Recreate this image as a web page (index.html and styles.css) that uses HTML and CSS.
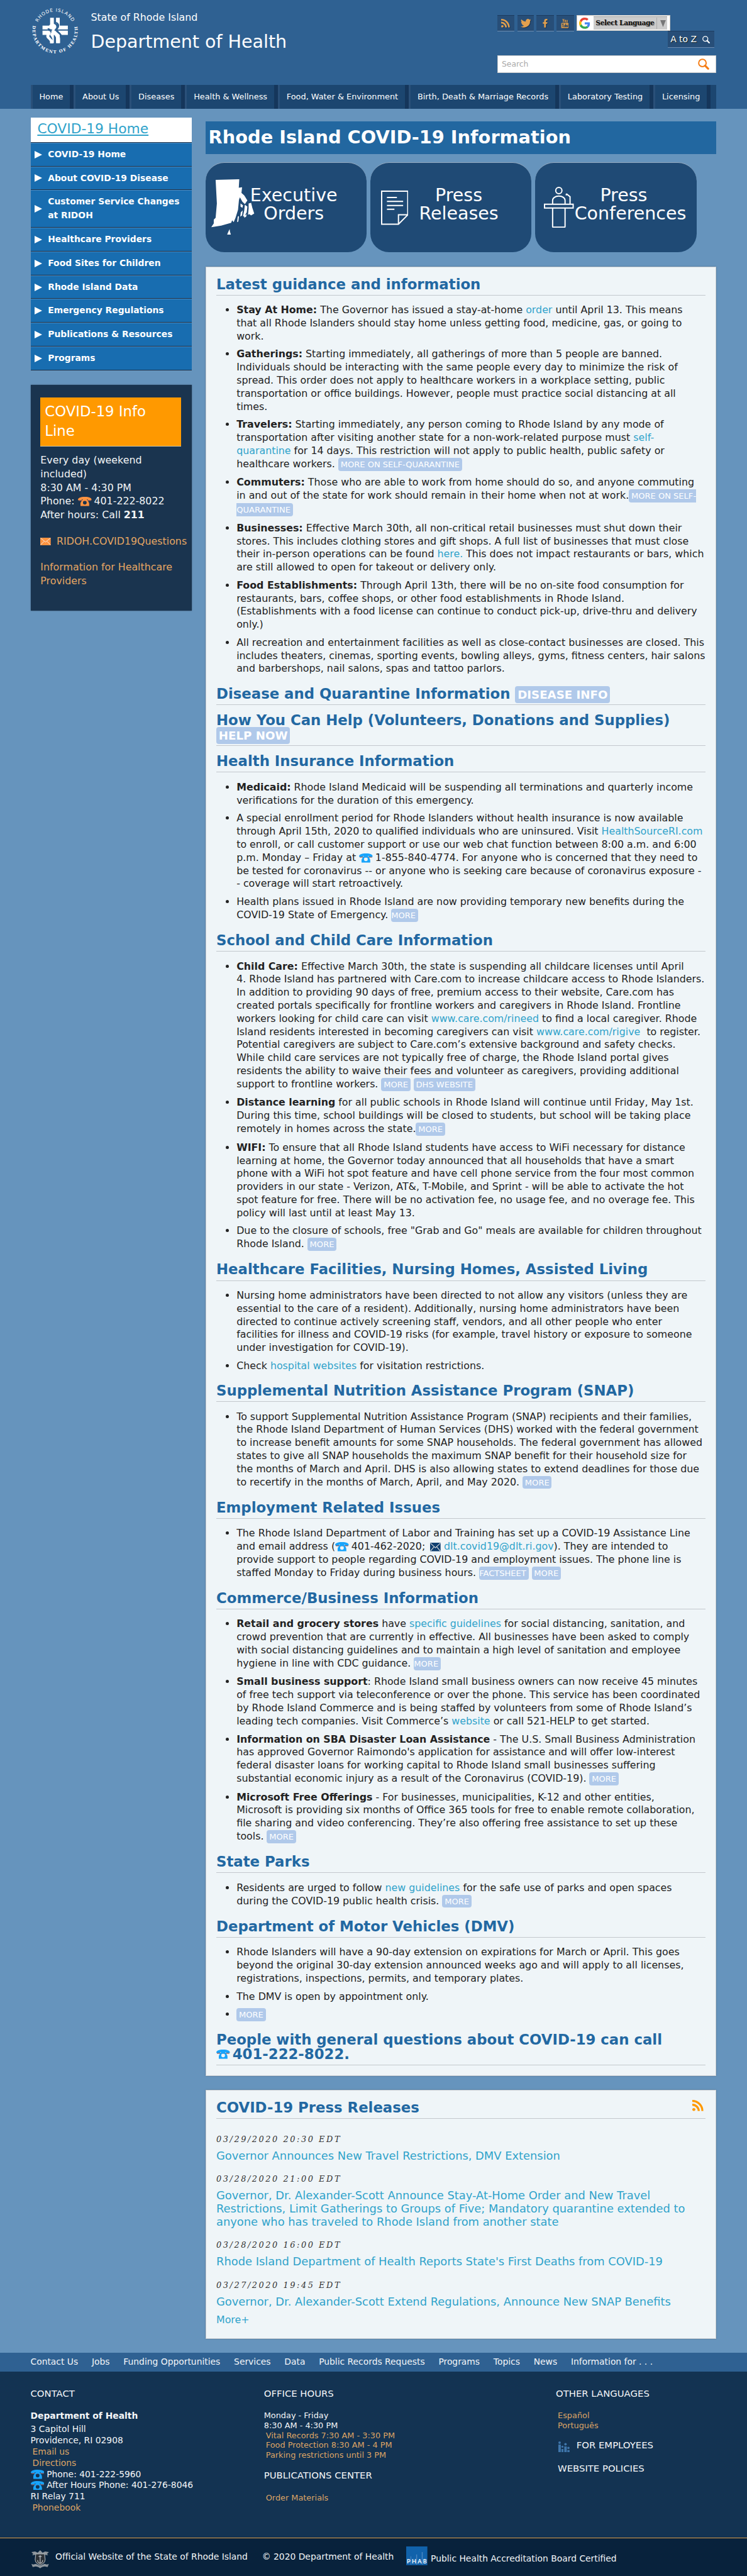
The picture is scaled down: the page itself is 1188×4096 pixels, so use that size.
FILE: index.html
```html
<!DOCTYPE html>
<html lang="en">
<head>
<meta charset="utf-8">
<title>Rhode Island COVID-19 Information: Department of Health</title>
<link rel="stylesheet" href="styles.css">
</head>
<body>
<svg class="sprite" aria-hidden="true">
  <symbol id="phone" viewBox="0 0 22 15">
    <path d="M1 5h20v1.500H1z" fill="#8a5f63"/>
    <path d="M0 5.200C0 1.500 4 0 11 0s11 1.500 11 5.200h-6.200V4H6.200v1.200z" fill="currentColor"/>
    <path fill-rule="evenodd" d="M8 3h6c.5 3 4 4.500 4 8.500V15H4v-3.500C4 7.500 7.500 6 8 3zm3 3.300a3 3 0 1 0 0 6a3 3 0 1 0 0-6z" fill="currentColor"/>
  </symbol>
  <symbol id="mail" viewBox="0 0 17 12" preserveAspectRatio="none">
    <path d="M0 0h17v12H0z" fill="currentColor"/>
    <path d="M.5.5l8 6.500 8-6.500M.5 11.500l6-6M16.500 11.500l-6-6" fill="none" stroke="#f6f1ec" stroke-width=".9"/>
  </symbol>
  <symbol id="rss" viewBox="0 0 16 16">
    <circle cx="2.200" cy="13.800" r="2.200"/>
    <path d="M0 5.300v3A7.700 7.700 0 0 1 7.700 16h3A10.700 10.700 0 0 0 0 5.300zM0 0v3A13 13 0 0 1 13 16h3A16 16 0 0 0 0 0z"/>
  </symbol>
  <symbol id="lens" viewBox="0 0 18 18">
    <ellipse cx="7.200" cy="7.200" rx="6" ry="6" fill="none" stroke="currentColor" stroke-width="2"/>
    <path d="M11.500 11.500l5 5" stroke="currentColor" stroke-width="3.200" stroke-linecap="round"/>
  </symbol>
</svg>

<header class="masthead">
  <div class="wrap">
    <div class="brand-row">
      <svg class="seal" viewBox="0 0 78 78">
        <defs>
          <path id="arc-top" d="M8.500 39a30.500 30.500 0 0 1 61 0"/>
          <path id="arc-bottom" d="M4.400 27.700a36.400 36.400 0 1 0 69.200 0"/>
        </defs>
        <text class="seal-top"><textPath href="#arc-top" startOffset="50%" text-anchor="middle">RHODE ISLAND</textPath></text>
        <text class="seal-bottom"><textPath href="#arc-bottom" startOffset="50%" text-anchor="middle">DEPARTMENT OF HEALTH</textPath></text>
        <path fill="#fff" d="M31 18.500h6V31h3.500V18.500h6V31h13v6.200H18.800V31H31zM18.800 39.200h40.700V46h-13v13h-6V46H37v13h-6V46H18.800z"/>
        <path fill="#2f6192" d="M40 25c5 1 6.500 5 5 9l-2 3c0 3 6 6 7 10h-3c-2-4-8-6-8-10l-1-2c1-5 4-7 2-10zM27 35c5 0 7 4 6 7l-2 4c2 3 4 5 4 9h-3c0-5-5-7-4-10z"/>
        <path fill="#fff" d="M29 32c2-6 12-5 12 1 0 3-3 3-3 6 1 4 9 7 9 13v7h-6v-6c0-6-7-9-7-14 0-3 3-4 2-6-1-2-5-2-7-1zM22 42c2-4 10-4 10 1 0 3-3 3-2 6 2 3 6 5 6 8v2.500h-5V57c-1-4-7-5-6-10 0-2 2-3 1-5-1-1-3-1-4 0z"/>
      </svg>
      <div class="names">
        <div class="state">State of Rhode Island</div>
        <div class="dept">Department of Health</div>
      </div>
      <div class="tools">
        <div class="social">
          <a class="tile"><svg viewBox="0 0 16 16" class="ic"><use href="#rss"/></svg></a>
          <a class="tile t2"><svg viewBox="0 0 24 20" class="ic bird"><path d="M24 2.400a9.800 9.800 0 0 1-2.800.8A5 5 0 0 0 23.300.5a9.900 9.900 0 0 1-3.100 1.200A4.900 4.900 0 0 0 11.800 6.200 14 14 0 0 1 1.700 1a4.900 4.900 0 0 0 1.500 6.600A4.900 4.900 0 0 1 1 7v.1a4.900 4.900 0 0 0 3.900 4.800 5 5 0 0 1-2.200.1 4.900 4.900 0 0 0 4.600 3.400A9.900 9.900 0 0 1 0 17.500 14 14 0 0 0 21.500 5z"/></svg></a>
          <a class="tile"><svg viewBox="0 0 10 18" class="ic fb"><path d="M6.500 18V10h2.700l.5-3.200H6.500V4.900c0-1 .5-1.700 1.700-1.700h1.500V.3C9 .1 8.200 0 7.200 0 4.700 0 3 1.500 3 4.400v2.400H.3V10H3v8z"/></svg></a>
          <a class="tile"><svg viewBox="0 0 14 18" class="ic yt"><path fill-rule="evenodd" d="M2 0h1.200l.8 2.700L4.800 0H6L4.600 4.300V7H3.400V4.300zM6 3.200C6 1.500 8.800 1.500 8.800 3.200v2.400c0 1.900-2.800 1.900-2.800 0zm1 0v2.500h.8V3.200zM9.600 2h1v4h.6V2h1v5H9.600zM1.500 8h11C13.500 8 14 8.700 14 9.500v7c0 1-.5 1.500-1.500 1.500h-11C.5 18 0 17.500 0 16.500v-7C0 8.700.5 8 1.500 8zM1.300 9.500v1.100h1V16h1.200v-5.400h1V9.500zM4.700 11.500V16h2.500v-4.500h-.9v3.600h-.6v-3.600zM7.800 9.500V16h2.400v-4.500H8.800v-2zM10.700 11.500V16H13v-4.500zm.9.900h.5v1h-.5z"/></svg></a>
          <div class="gtrans">
            <svg class="g" viewBox="0 0 48 48"><path fill="#ea4335" d="M24 9.500c3.500 0 6.700 1.200 9.200 3.600l6.900-6.900C35.900 2.400 30.500 0 24 0 14.600 0 6.500 5.400 2.600 13.200l8 6.200C12.400 13.700 17.700 9.500 24 9.500z"/><path fill="#4285f4" d="M47 24.500c0-1.600-.2-3.100-.4-4.500H24v9h12.900c-.6 3-2.200 5.500-4.700 7.200l7.700 6C44.400 38 47 31.800 47 24.500z"/><path fill="#fbbc05" d="M10.500 28.600a14.500 14.500 0 0 1 0-9.200l-8-6.200a24 24 0 0 0 0 21.600z"/><path fill="#34a853" d="M24 48c6.500 0 11.900-2.100 15.900-5.800l-7.700-6C30 37.700 27.300 38.500 24 38.500c-6.300 0-11.600-4.200-13.500-9.900l-8 6.200C6.500 42.600 14.600 48 24 48z"/></svg>
            <span class="gsel"><span class="glabel">Select Language</span><svg class="gtri" viewBox="0 0 9 11"><path d="M0 0h9L4.500 11z" fill="#777"/></svg></span>
          </div>
        </div>
        <a class="atoz">A to Z <svg class="az-lens" viewBox="0 0 18 18"><use href="#lens"/></svg></a>
        <div class="search"><span>Search</span><svg class="s-lens" viewBox="0 0 18 18"><use href="#lens"/></svg></div>
      </div>
    </div>
    <nav class="mainnav">
      <a>Home</a><a>About Us</a><a>Diseases</a><a>Health &amp; Wellness</a><a>Food, Water &amp; Environment</a><a>Birth, Death &amp; Marriage Records</a><a>Laboratory Testing</a><a>Licensing</a>
    </nav>
  </div>
</header>

<div class="wrap columns">
  <aside class="side">
    <h2 class="side-title"><a>COVID-19 Home</a></h2>
    <ul class="side-menu">
      <li>COVID-19 Home</li>
      <li>About COVID-19 Disease</li>
      <li>Customer Service Changes at RIDOH</li>
      <li>Healthcare Providers</li>
      <li>Food Sites for Children</li>
      <li>Rhode Island Data</li>
      <li>Emergency Regulations</li>
      <li>Publications &amp; Resources</li>
      <li>Programs</li>
    </ul>
    <div class="info">
      <h3>COVID-19 Info Line</h3>
      <p>Every day (weekend included)<br>8:30 AM - 4:30 PM<br>Phone: <svg class="phone" viewBox="0 0 22 15"><use href="#phone"/></svg>401-222-8022<br>After hours: Call <b>211</b></p>
      <p class="mailline"><svg class="mail" viewBox="0 0 17 12"><use href="#mail"/></svg><a>RIDOH.COVID19Questions</a></p>
      <p><a>Information for Healthcare Providers</a></p>
    </div>
  </aside>

  <main class="main">
    <h1>Rhode Island COVID-19 Information</h1>
    <div class="cards">
      <a class="card">
        <span class="card-ic"><svg class="map" viewBox="0 0 70 92" fill="#fff"><path d="M7 2L45 1L44.200 14.700L49.500 14L48.500 23L53 27L58 35L54 41L50 37L46 30L44.500 34L43 50L39 63L36 70L33.500 67L32 71L16 75.500L0 78L4 72L4 66L7 63L9 40z"/><path d="M60 40l4-1 2 8 3 9-5 3-3-2-2 1 1-10zM54 42l4 3-1 9-4 7-2-1 2-9zM47 40l4 3-1 4-3-2zM47.500 54l3-3-1 8-3 2zM44.500 60l-1 9-2 1 1-9zM53 60l4-3-1 4-3 2zM29.500 81l.5 4 1.500 5h-6l2-5z"/></svg></span>
        <span class="card-tx">Executive<br>Orders</span>
      </a>
      <a class="card">
        <span class="card-ic"><svg class="doc" viewBox="0 0 44 56" fill="none" stroke="#fff" stroke-width="2"><path d="M1 1h42v38L28 54H1zM28 54V39h15M9.500 11h16M9.500 17.500h26M9.500 24h26M9.500 30h12"/></svg></span>
        <span class="card-tx">Press<br>Releases</span>
      </a>
      <a class="card">
        <span class="card-ic"><svg class="podium" viewBox="0 0 48 66" fill="none" stroke="#fff" stroke-width="2"><ellipse cx="24" cy="6" rx="5" ry="5"/><path d="M14 27v-5c0-4 4-7 10-7s10 3 10 7v5M1 28h46v6H1zM14 34v30q0 1 1 1h18q1 0 1-1V34M36 11l6 5v11M36 11v3"/></svg></span>
        <span class="card-tx">Press<br>Conferences</span>
      </a>
    </div>

    <section class="panel">
      <h3>Latest guidance and information</h3>
      <ul>
        <li><b>Stay At Home:</b> The Governor has issued a stay-at-home <a>order</a> until April 13. This means that all Rhode Islanders should stay home unless getting food, medicine, gas, or going to work.</li>
        <li><b>Gatherings:</b> Starting immediately, all gatherings of more than 5 people are banned. Individuals should be interacting with the same people every day to minimize the risk of spread. This order does not apply to healthcare workers in a workplace setting, public transportation or office buildings. However, people must practice social distancing at all times.</li>
        <li><b>Travelers:</b> Starting immediately, any person coming to Rhode Island by any mode of transportation after visiting another state for a non-work-related purpose must <a>self-quarantine</a> for 14 days. This restriction will not apply to public health, public safety or healthcare workers. <span class="btn">MORE ON SELF-QUARANTINE</span></li>
        <li><b>Commuters:</b> Those who are able to work from home should do so, and anyone commuting in and out of the state for work should remain in their home when not at work.<span class="btn">MORE ON SELF-QUARANTINE</span></li>
        <li><b>Businesses:</b> Effective March 30th, all non-critical retail businesses must shut down their stores. This includes clothing stores and gift shops. A full list of businesses that must close their in-person operations can be found <a>here.</a> This does not impact restaurants or bars, which are still allowed to open for takeout or delivery only.</li>
        <li><b>Food Establishments:</b> Through April 13th, there will be no on-site food consumption for restaurants, bars, coffee shops, or other food establishments in Rhode Island. (Establishments with a food license can continue to conduct pick-up, drive-thru and delivery only.)</li>
        <li>All recreation and entertainment facilities as well as close-contact businesses are closed. This includes theaters, cinemas, sporting events, bowling alleys, gyms, fitness centers, hair salons and barbershops, nail salons, spas and tattoo parlors.</li>
      </ul>
      <h3>Disease and Quarantine Information <span class="btn">DISEASE INFO</span></h3>
      <h3>How You Can Help (Volunteers, Donations and Supplies) <span class="btn">HELP NOW</span></h3>
      <h3>Health Insurance Information</h3>
      <ul>
        <li><b>Medicaid:</b> Rhode Island Medicaid will be suspending all terminations and quarterly income verifications for the duration of this emergency.</li>
        <li>A special enrollment period for Rhode Islanders without health insurance is now available through April 15th, 2020 to qualified individuals who are uninsured. Visit <a>HealthSourceRI.com</a> to enroll, or call customer support or use our web chat function between 8:00 a.m. and 6:00 p.m. Monday – Friday at <svg class="phone" viewBox="0 0 22 15"><use href="#phone"/></svg>1-855-840-4774. For anyone who is concerned that they need to be tested for coronavirus -- or anyone who is seeking care because of coronavirus exposure -<br>- coverage will start retroactively.</li>
        <li>Health plans issued in Rhode Island are now providing temporary new benefits during the COVID-19 State of Emergency. <span class="btn flush">MORE</span></li>
      </ul>
      <h3>School and Child Care Information</h3>
      <ul>
        <li><b>Child Care:</b> Effective March 30th, the state is suspending all childcare licenses until April 4.&nbsp;Rhode Island has partnered with Care.com to increase childcare access to Rhode Islanders. In addition to providing 90 days of free, premium access to their website, Care.com has created portals specifically for frontline workers and caregivers in Rhode Island. Frontline workers looking for child care can visit <a>www.care.com/rineed</a> to find a local caregiver. Rhode Island residents interested in becoming caregivers can visit <a>www.care.com/rigive</a>&nbsp; to register. Potential caregivers are subject to Care.com’s extensive background and safety checks. While child care services are not typically free of charge, the Rhode Island portal gives residents the ability to waive their fees and volunteer as caregivers, providing additional support to frontline workers. <span class="btn">MORE</span> <span class="btn">DHS WEBSITE</span></li>
        <li><b>Distance learning</b> for all public schools in Rhode Island will continue until Friday, May 1st. During this time, school buildings will be closed to students, but school will be taking place remotely in homes across the state.<span class="btn">MORE</span></li>
        <li><b>WIFI:</b> To ensure that all Rhode Island students have access to WiFi necessary for distance learning at home, the Governor today announced that all households that have a smart phone with a WiFi hot spot feature and have cell phone service from the four most common providers in our state - Verizon, AT&amp;, T-Mobile, and Sprint - will be able to activate the hot spot feature for free. There will be no activation fee, no usage fee, and no overage fee. This policy will last until at least May 13.</li>
        <li>Due to the closure of schools, free "Grab and Go" meals are available for children throughout Rhode Island. <span class="btn">MORE</span></li>
      </ul>
      <h3>Healthcare Facilities, Nursing Homes, Assisted Living</h3>
      <ul>
        <li>Nursing home administrators have been directed to not allow any visitors (unless they are essential to the care of a resident). Additionally, nursing home administrators have been directed to continue actively screening staff, vendors, and all other people who enter facilities for illness and COVID-19 risks (for example, travel history or exposure to someone under investigation for COVID-19).</li>
        <li>Check <a>hospital websites</a> for visitation restrictions.</li>
      </ul>
      <h3>Supplemental Nutrition Assistance Program (SNAP)</h3>
      <ul>
        <li>To support Supplemental Nutrition Assistance Program (SNAP) recipients and their families, the Rhode Island Department of Human Services (DHS) worked with the federal government to increase benefit amounts for some SNAP households. The federal government has allowed states to give all SNAP households the maximum SNAP benefit for their household size for the months of March and April. DHS is also allowing states to extend deadlines for those due to recertify in the months of March, April, and May 2020. <span class="btn">MORE</span></li>
      </ul>
      <h3>Employment Related Issues</h3>
      <ul>
        <li>The Rhode Island Department of Labor and Training has set up a COVID-19 Assistance Line and email address (<svg class="phone" viewBox="0 0 22 15"><use href="#phone"/></svg>401-462-2020; <svg class="mail" viewBox="0 0 17 12" preserveAspectRatio="none"><use href="#mail"/></svg><a>dlt.covid19@dlt.ri.gov</a>). They are intended to provide support to people regarding COVID-19 and employment issues. The phone line is staffed Monday to Friday during business hours. <span class="btn flush">FACTSHEET</span> <span class="btn">MORE</span></li>
      </ul>
      <h3>Commerce/Business Information</h3>
      <ul>
        <li><b>Retail and grocery stores</b> have <a>specific guidelines</a> for social distancing, sanitation, and crowd prevention that are currently in effective. All businesses have been asked to comply with social distancing guidelines and to maintain a high level of sanitation and employee hygiene in line with CDC guidance. <span class="btn flush">MORE</span></li>
        <li><b>Small business support</b>: Rhode Island small business owners can now receive 45 minutes of free tech support via teleconference or over the phone. This service has been coordinated by Rhode Island Commerce and is being staffed by volunteers from some of Rhode Island’s leading tech companies. Visit Commerce’s <a>website</a> or call 521-HELP to get started.</li>
        <li><b>Information on SBA Disaster Loan Assistance</b> - The U.S. Small Business Administration has approved Governor Raimondo's application for assistance and will offer low-interest federal disaster loans for working capital to Rhode Island small businesses suffering substantial economic injury as a result of the Coronavirus (COVID-19). <span class="btn">MORE</span></li>
        <li><b>Microsoft Free Offerings</b> - For businesses, municipalities, K-12 and other entities, Microsoft&nbsp;is providing six months of Office 365 tools for free to enable remote collaboration, file sharing and video conferencing. They’re also offering free assistance to set up these tools. <span class="btn">MORE</span></li>
      </ul>
      <h3>State Parks</h3>
      <ul>
        <li>Residents are urged to follow <a>new guidelines</a> for the safe use of parks and open spaces during the COVID-19 public health crisis. <span class="btn">MORE</span></li>
      </ul>
      <h3>Department of Motor Vehicles (DMV)</h3>
      <ul>
        <li>Rhode Islanders will have a 90-day extension on expirations for March or April. This goes beyond the original 30-day extension announced weeks ago and will apply to all licenses, registrations, inspections, permits, and temporary plates.</li>
        <li>The DMV is open by appointment only.</li>
        <li><span class="btn">MORE</span></li>
      </ul>
      <h3>People with general questions about COVID-19 can call <span class="keep"><svg class="phone" viewBox="0 0 22 15"><use href="#phone"/></svg>401-222-8022.</span></h3>
    </section>

    <section class="panel press">
      <h3>COVID-19 Press Releases<svg class="press-rss" viewBox="0 0 16 16"><use href="#rss"/></svg></h3>
      <div class="date">03/29/2020 20:30 EDT</div>
      <a class="release">Governor Announces New Travel Restrictions, DMV Extension</a>
      <div class="date">03/28/2020 21:00 EDT</div>
      <a class="release">Governor, Dr. Alexander-Scott Announce Stay-At-Home Order and New Travel Restrictions, Limit Gatherings to Groups of Five; Mandatory quarantine extended to anyone who has traveled to Rhode Island from another state</a>
      <div class="date">03/28/2020 16:00 EDT</div>
      <a class="release">Rhode Island Department of Health Reports State's First Deaths from COVID-19</a>
      <div class="date">03/27/2020 19:45 EDT</div>
      <a class="release">Governor, Dr. Alexander-Scott Extend Regulations, Announce New SNAP Benefits</a>
      <a class="more">More+</a>
    </section>
  </main>
</div>

<footer>
  <div class="footnav"><div class="wrap"><a>Contact Us</a><a>Jobs</a><a>Funding Opportunities</a><a>Services</a><a>Data</a><a>Public Records Requests</a><a>Programs</a><a>Topics</a><a>News</a><a>Information for . . .</a></div></div>
  <div class="footmain">
    <div class="wrap footcols">
      <div class="fc contact">
        <h4>CONTACT</h4>
        <b>Department of Health</b>
        <div>3 Capitol Hill</div>
        <div>Providence, RI 02908</div>
        <div><a>Email us</a></div>
        <div><a>Directions</a></div>
        <div><svg class="phone" viewBox="0 0 22 15"><use href="#phone"/></svg>Phone: 401-222-5960</div>
        <div><svg class="phone" viewBox="0 0 22 15"><use href="#phone"/></svg>After Hours Phone: 401-276-8046</div>
        <div>RI Relay 711</div>
        <div><a>Phonebook</a></div>
      </div>
      <div class="fc small hours">
        <h4>OFFICE HOURS</h4>
        <div>Monday - Friday</div>
        <div>8:30 AM - 4:30 PM</div>
        <div><a>Vital Records 7:30 AM - 3:30 PM</a></div>
        <div><a>Food Protection 8:30 AM - 4 PM</a></div>
        <div><a>Parking restrictions until 3 PM</a></div>
        <h4 class="pub">PUBLICATIONS CENTER</h4>
        <div><a>Order Materials</a></div>
      </div>
      <div class="fc small langs">
        <h4>OTHER LANGUAGES</h4>
        <div><a>Español</a></div>
        <div><a>Português</a></div>
        <h4 class="emp"><svg class="people" viewBox="0 0 18 18" fill="#3f76ab"><circle cx="2" cy="2" r="2"/><path d="M0 5h4v13H0zM5 12h3v6H5zM9.500 8h4v10h-4zM14.500 14H18v4h-3.500z"/><circle cx="6.500" cy="8.500" r="1.700"/><circle cx="11.500" cy="4.500" r="2"/><circle cx="16.200" cy="10.500" r="1.800"/></svg>FOR EMPLOYEES</h4>
        <h4 class="pol">WEBSITE POLICIES</h4>
      </div>
    </div>
  </div>
  <div class="footbase">
    <div class="wrap">
      <svg class="crest" viewBox="0 0 30 30"><path d="M1 4l6-1 4 2 4-4 4 4 4-2 6 1-3 3 2 2-7-1-6 1-6-1-7 1 2-2zM1 23l3 1 4-1 7 3 7-3 4 1 3-1-2 5-5-1-4 1-3 2-3-2-4-1-5 1z" fill="#8f979e"/><path d="M8 7h14l1 9c0 5-4 7-8 9-4-2-8-4-8-9z" fill="#2b3036" stroke="#a4aab0" stroke-width="1.200"/><path d="M15 9v13M12.500 11h5M11 17c0 3 2 5 4 5s4-2 4-5" fill="none" stroke="#b9bec3" stroke-width="1.300"/></svg>
      <span class="official">Official Website of the State of Rhode Island</span>
      <span class="copy">© 2020 Department of Health</span>
      <svg class="phab" viewBox="0 0 34 30"><path d="M0 0h34v30H0z" fill="#1162ab"/><path d="M7 16h1v13H7zM16 13h1.500v16H16zM25 9h1.500v20H25z" fill="#4b87c2"/><text x="17" y="27.500" text-anchor="middle" textLength="32">PHAB</text></svg>
      <span class="accred">Public Health Accreditation Board Certified</span>
    </div>
  </div>
</footer>
</body>
</html>
```
FILE: styles.css
```css
html {
  font-size: 9.9px;
}
* {
  box-sizing: border-box;
}
body {
  margin: 0;
  background: #6694bd;
  color: #222;
  font: 1.6rem/2.1rem "DejaVu Sans", Verdana, sans-serif;
}
ul {
  list-style: none;
  margin: 0;
  padding: 0;
}
h1, h2, h3, h4, p {
  margin: 0;
}
.sprite {
  display: none;
}
.wrap {
  width: 110.2rem;
  margin: 0 4.9rem;
}
.phone {
  width: 2.2rem;
  height: 1.5rem;
  margin-right: 0.4rem;
  vertical-align: -0.3rem;
  color: #18a4fb;
}
.mail {
  width: 1.7rem;
  height: 1.2rem;
}

/* masthead */
.masthead {
  height: 17.5rem;
  background: #2f6192;
  color: #fff;
}
.brand-row {
  display: flex;
  height: 13.6rem;
}
.seal {
  width: 7.8rem;
  height: 7.8rem;
  margin: 1rem 0 0 0.05rem;
}
.seal text {
  fill: #fff;
}
.seal-top {
  font: 7.5px "DejaVu Sans", sans-serif;
  letter-spacing: 0.9px;
}
.seal-bottom {
  font: bold 6.6px "DejaVu Serif", serif;
  letter-spacing: 1.5px;
}
.names {
  flex: 1;
  padding: 1.8rem 0 0 1.85rem;
}
.state {
  line-height: 2.1rem;
}
.dept {
  margin-top: 0.9rem;
  font-size: 2.88rem;
  line-height: 3.8rem;
}
.tools {
  display: flex;
  flex-direction: column;
  width: 35.2rem;
  padding-top: 2.4rem;
}
.social {
  display: flex;
  gap: 0.4rem;
  height: 2.6rem;
}
.tile {
  display: flex;
  align-items: center;
  justify-content: center;
  width: 2.8rem;
  height: 2.7rem;
  background: #274e78;
  border-top: 1px solid #1c3c5f;
  border-bottom: 1px solid #6d8cb0;
}
.tile:first-child {
  width: 2.7rem;
}
.t2 {
  width: 2.7rem;
  margin-left: 0.1rem;
}
.ic {
  width: 1.4rem;
  height: 1.4rem;
  fill: #e2a04e;
  filter: drop-shadow(1px 1px 0 #1b3655);
}
.bird {
  width: 1.7rem;
}
.fb {
  width: 0.8rem;
}
.yt {
  width: 1.3rem;
  height: 1.5rem;
}
.gtrans {
  display: flex;
  align-items: center;
  width: 15.1rem;
  height: 2.6rem;
  padding-left: 0.3rem;
  background: #fff;
  border: 1px solid #cfcac4;
}
.g {
  width: 1.8rem;
  height: 1.8rem;
}
.gsel {
  display: flex;
  align-items: center;
  width: 11.8rem;
  height: 2.1rem;
  margin-left: 0.6rem;
  padding: 0 0.1rem 0 0.3rem;
  background: #ccc;
  border-top: 1px solid #999;
  color: #111;
  font: bold 1.2rem/1.8rem "DejaVu Serif Condensed", "DejaVu Serif", serif;
  text-shadow: 1px 1px 1px #888;
}
.glabel {
  width: 9.9rem;
  border-right: 1px solid #aaa;
  white-space: nowrap;
  letter-spacing: -0.04rem;
}
.gtri {
  width: 0.9rem;
  height: 1.1rem;
  margin-left: 0.5rem;
}
.atoz {
  display: flex;
  align-items: center;
  align-self: flex-end;
  gap: 0.9rem;
  width: 7.4rem;
  height: 2.7rem;
  margin-right: 0.4rem;
  padding-left: 0.4rem;
  background: #274e78;
  border-top: 1px solid #1c3c5f;
  border-bottom: 1px solid #6d8cb0;
  font-size: 1.4rem;
  text-shadow: 1px 1px 1px #122;
}
.az-lens {
  width: 1.2rem;
  height: 1.2rem;
}
.search {
  display: flex;
  align-items: center;
  justify-content: space-between;
  height: 2.8rem;
  margin-top: 1.2rem;
  padding: 0 1.1rem 0 0.6rem;
  background: #fff;
  border: 1px solid #ccc;
  color: #aaa;
  font-size: 1.25rem;
}
.s-lens {
  width: 1.8rem;
  height: 1.8rem;
  color: #f57c14;
}
.mainnav {
  display: flex;
  height: 3.9rem;
  background: #1c4670;
  font-size: 1.3rem;
  line-height: 3.9rem;
}
.mainnav a {
  padding: 0 1.1rem;
  border-left: 3px solid #2a5079;
  border-right: 6px solid #15365b;
  white-space: nowrap;
}

/* side column */
.columns {
  display: flex;
  gap: 2.2rem;
  height: 360.4rem;
}
.side {
  width: 25.9rem;
  padding-top: 1.4rem;
}
.side-title {
  height: 3.9rem;
  padding-left: 1.1rem;
  background: #fff;
  color: #2fa3cb;
  font-size: 2.2rem;
  font-weight: normal;
  line-height: 3.6rem;
}
.side-title a {
  text-decoration: underline;
}
.side-menu {
  border-top: 1px solid #1c3148;
}
.side-menu li {
  position: relative;
  padding: 0.71rem 1.2rem 0.71rem 2.8rem;
  background: #186db0;
  border-top: 1px solid #4a8cc4;
  border-bottom: 1px solid #1c3148;
  color: #fff;
  font-size: 1.4rem;
  font-weight: bold;
  line-height: 2.2rem;
}
.side-menu li::before {
  content: "";
  position: absolute;
  left: 0.7rem;
  top: calc(50% - 0.6rem);
  border-left: 1.3rem solid #fff;
  border-top: 0.7rem solid transparent;
  border-bottom: 0.7rem solid transparent;
}
.info {
  height: 36.3rem;
  margin-top: 2.35rem;
  padding: 2rem 1.6rem;
  background: #1a344f;
  box-shadow: 0 0 2px rgba(0, 0, 0, 0.4);
  color: #f2f4f6;
  line-height: 2.2rem;
}
.info h3 {
  margin: 0 0.1rem 1.1rem 0;
  padding: 0.7rem;
  background: #f90;
  border-bottom: 1px solid #d8c8a0;
  color: #fff;
  font-size: 2.3rem;
  font-weight: normal;
  line-height: 3.2rem;
}
.info p {
  margin-bottom: 2rem;
}
.info a {
  color: #e5a663;
}
.info .phone {
  color: #ff9340;
}
.info .mail {
  margin-right: 0.9rem;
  color: #ff9340;
  vertical-align: -0.1rem;
}
.mailline {
  white-space: nowrap;
}

/* main column */
.main {
  width: 82.1rem;
  padding-top: 2rem;
}
h1 {
  height: 5.2rem;
  padding-left: 0.5rem;
  background: #2267a0;
  color: #fff;
  font-size: 2.91rem;
  line-height: 5.1rem;
}
.cards {
  display: flex;
  gap: 0.6rem;
  margin-top: 1.4rem;
}
.card {
  display: flex;
  width: 25.9rem;
  height: 14.4rem;
  background: #1f4a75;
  border-top: 1px solid #93a9c0;
  border-radius: 3rem;
  color: #fff;
  font-size: 2.88rem;
  line-height: 2.9rem;
}
.card-ic {
  flex: none;
  width: 6.3rem;
}
.card-tx {
  width: 15.8rem;
  padding-top: 3.8rem;
  text-align: center;
}
.card svg {
  display: block;
}
.map {
  width: 7rem;
  height: 9.2rem;
  margin: 2.5rem 0 0 0.95rem;
}
.doc {
  width: 4.4rem;
  height: 5.6rem;
  margin: 4.4rem 0 0 1.7rem;
}
.podium {
  width: 4.8rem;
  height: 6.6rem;
  margin: 3.8rem 0 0 1.4rem;
}
.panel {
  margin-top: 2.3rem;
  padding: 1.6rem 1.65rem;
  background: #eff5f8;
  border: 1px solid #c6ccd2;
  box-shadow: 0 0 2px rgba(0, 0, 0, 0.3);
}
.panel h3 {
  padding-bottom: 0.55rem;
  border-bottom: 1px solid #c3c8cd;
  color: #2268a2;
  font-size: 2.304rem;
  line-height: 1;
}
.panel h3 + h3 {
  margin-top: 1.33rem;
}
.panel ul {
  margin: 1.35rem 0 1.75rem;
  padding-left: 3.25rem;
  list-style: disc;
}
.panel li + li {
  margin-top: 0.8rem;
}
.panel a {
  color: #2fa3cb;
}
.btn {
  padding: 0.3rem 0.38rem;
  background: #b0c9ea;
  border-radius: 4px;
  color: #fff;
  font-size: 1.32rem;
}
.flush {
  padding-left: 0;
}
h3 .btn {
  font-size: 1.84rem;
}
.panel .mail {
  height: 1.4rem;
  margin: 0 0.5rem 0 0.3rem;
  vertical-align: -0.3rem;
  color: #0f3f70;
}
.panel h3 .phone {
  vertical-align: 0;
}
.keep {
  white-space: nowrap;
}
.press {
  height: 40rem;
  margin-top: 2.2rem;
}
.press h3 {
  display: flex;
  justify-content: space-between;
  margin-bottom: 2.3rem;
}
.press-rss {
  width: 1.8rem;
  height: 1.8rem;
  margin: -0.1rem 0.3rem 0 0;
  fill: #f90;
}
.date {
  color: #333;
  font: italic 1.3rem/2.1rem "DejaVu Serif", serif;
  letter-spacing: 0.26rem;
}
.release {
  display: block;
  margin: 0.53rem 0 1.67rem;
  font-size: 1.805rem;
}
.more {
  display: block;
  margin-top: -0.8rem;
}

/* footer */
footer {
  color: #f4f6f8;
}
.footnav {
  height: 3rem;
  background: #2f6192;
  font-size: 1.4rem;
  line-height: 3rem;
}
.footnav .wrap {
  display: flex;
  gap: 2.2rem;
  white-space: nowrap;
}
.footmain {
  height: 26.8rem;
  padding-top: 2.6rem;
  background: #133352;
  border-bottom: 1px solid #dd9d48;
}
.footcols {
  display: flex;
}
.fc {
  flex: none;
  width: 37.5rem;
  font-size: 1.4rem;
  line-height: 1.8rem;
}
.hours {
  width: 46.9rem;
}
.langs {
  width: 25.8rem;
}
.small {
  font-size: 1.3rem;
  line-height: 1.6rem;
}
.fc h4 {
  height: 2rem;
  margin-bottom: 1.67rem;
  font-size: 1.5rem;
  font-weight: normal;
  line-height: 2rem;
}
.contact b {
  display: block;
  margin-bottom: 0.37rem;
}
.fc a {
  margin-left: 0.3rem;
  color: #dda465;
}
.fc .pub {
  margin-top: 1.53rem;
}
.fc .emp {
  display: flex;
  align-items: center;
  margin-top: 1.47rem;
  margin-bottom: 1.73rem;
}
.people {
  width: 1.8rem;
  height: 1.8rem;
  margin: 0.3rem 1.1rem 0 0.4rem;
}
.fc .pol {
  margin-left: 0.3rem;
}
.footbase {
  height: 6.03rem;
  background: #08223c;
  font-size: 1.4rem;
}
.footbase .wrap {
  display: flex;
  align-items: flex-start;
  white-space: nowrap;
}
.crest {
  width: 3rem;
  height: 3rem;
  margin-top: 1.8rem;
}
.official {
  width: 33.2rem;
  margin: 1.9rem 0 0 1rem;
}
.copy {
  width: 23.2rem;
  margin-top: 1.9rem;
}
.phab {
  width: 3.4rem;
  height: 3rem;
  margin-top: 1.3rem;
}
.phab text {
  fill: #fff;
  font: bold 9px "Lato", sans-serif;
}
.accred {
  margin: 2.2rem 0 0 0.5rem;
}
```
